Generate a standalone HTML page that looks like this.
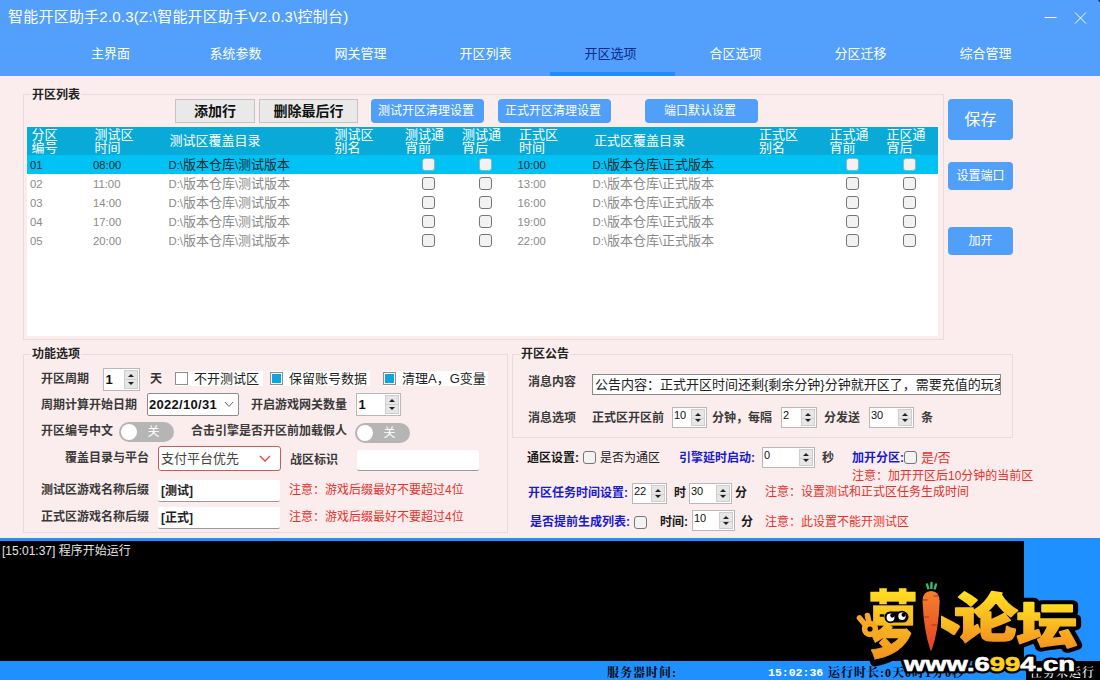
<!DOCTYPE html>
<html lang="zh-CN">
<head>
<meta charset="utf-8">
<title>智能开区助手2.0.3</title>
<style>
*{box-sizing:border-box;margin:0;padding:0}
html,body{width:1100px;height:680px;overflow:hidden}
body{position:relative;background:#fbeded;font-family:"Liberation Sans","Noto Sans CJK SC",sans-serif;font-size:12px;color:#333;}
.abs,.abs-all>*{position:absolute}
.a{position:absolute;white-space:nowrap;line-height:1}
/* header */
#hdr{position:absolute;left:0;top:0;width:1100px;height:76px;background:#52a0fb}
#title{left:8px;top:7.8px;font-size:15px;color:#fff;line-height:18px;letter-spacing:.22px}
.tab{position:absolute;top:43.6px;margin-left:-1px;width:125px;height:20px;text-align:center;font-size:13px;line-height:20px;color:#fff}
.tab.on{color:#0a2a8c}
#uline{position:absolute;left:550px;top:72px;width:125px;height:4px;background:#1e8cff}
/* group boxes */
.gb{position:absolute;border:1px solid #e6dcdc;}
.gbl{position:absolute;font-weight:bold;font-size:12px;color:#222;background:#fbeded;line-height:14px;padding:0 1px;white-space:nowrap}
.lb{position:absolute;font-weight:bold;font-size:12px;line-height:14px;color:#3a3a3a;white-space:nowrap}
.bl{color:#1a1ad2}
.bk{color:#1a1a1a}
.red{position:absolute;font-size:12px;line-height:14px;color:#e8302a;white-space:nowrap}
.btn{position:absolute;background:#50a0fa;color:#fff;border-radius:4px;text-align:center;font-size:12px;white-space:nowrap}
.gbtn{position:absolute;background:#e9e9e9;border:1px solid #c4c4c4;color:#111;font-weight:bold;font-size:14px;text-align:center;white-space:nowrap}
/* table */
#tbl{position:absolute;left:27px;top:127px;width:911px;height:209px;background:#fff}
#th{position:absolute;left:0;top:0;width:911px;height:28px;background:#09aad8}
#sel{position:absolute;left:0;top:28px;width:911px;height:19px;background:#00c2f4}
.h{position:absolute;color:#fff;font-size:13px;line-height:13px;white-space:nowrap}
.c{position:absolute;font-size:13px;line-height:19px;color:#8a8a8a;white-space:nowrap}
.c.n,.c em{font-size:11.3px;font-style:normal}
.c.n{margin-top:.5px}
.c.s{color:#1a2a33}
.cb{position:absolute;width:13px;height:13px;border:1px solid #767676;border-radius:3px;background:#f2f2f2}
/* spinner */
.sp{position:absolute;background:#fff;border:1px solid #b9b9b9;height:21px}
.sp i{position:absolute;left:1px;top:1px;font-style:normal;font-size:11px;line-height:12px;color:#111}
.sp b{position:absolute;right:1px;top:1px;bottom:1px;width:14px;background:#e6e6e6;border:1px solid #cfcfcf}
.sp b:before{content:"";position:absolute;left:3px;top:3px;border:3px solid transparent;border-top:none;border-bottom:3px solid #222}
.sp b:after{content:"";position:absolute;left:3px;bottom:3px;border:3px solid transparent;border-bottom:none;border-top:3px solid #222}
.sp b s{position:absolute;left:0;right:0;top:8px;height:1px;background:#cfcfcf}
.tg{position:absolute;width:55px;height:20px;border-radius:10px;background:#b5b5b5}
.tg:before{content:"";position:absolute;left:2px;top:2px;width:16px;height:16px;border-radius:8px;background:#fff}
.tg span{position:absolute;left:28.5px;top:3px;font-size:12px;line-height:14px;color:#fff}
.inp{position:absolute;background:#fff;border-radius:2px;border-bottom:1px solid #9a9a9a;font-weight:bold;font-size:12px;color:#222;line-height:20px;padding-left:3px}
.wck{position:absolute;background:#fff;height:15px;padding-right:1px;box-sizing:content-box}
.wck u{position:absolute;left:0;top:1px;width:13px;height:13px;border:1px solid #8e8e8e;background:#fff;text-decoration:none}
.wck u.on:after{content:"";position:absolute;left:1px;top:1px;width:9px;height:9px;background:#0aa6dd}
.wck span{position:absolute;left:19px;top:0;font-size:13px;line-height:15px;color:#222;white-space:nowrap}
.sb{font-weight:bold;font-size:12px;line-height:14px;letter-spacing:1px;font-family:"Liberation Serif","Noto Serif CJK SC",serif}
</style>
</head>
<body>
<div id="hdr"></div>
<div id="title" class="a">智能开区助手2.0.3(Z:\智能开区助手V2.0.3\控制台)</div>
<div class="tab" style="left:49px">主界面</div>
<div class="tab" style="left:174px">系统参数</div>
<div class="tab" style="left:299px">网关管理</div>
<div class="tab" style="left:424px">开区列表</div>
<div class="tab on" style="left:549px">开区选项</div>
<div class="tab" style="left:674px">合区选项</div>
<div class="tab" style="left:799px">分区迁移</div>
<div class="tab" style="left:924px">综合管理</div>
<div id="uline"></div>
<div style="position:absolute;left:1097.5px;top:-2px;width:5px;height:4px;border-radius:2px;background:#0d4a78"></div>
<svg class="abs" style="position:absolute;left:1040px;top:8px" width="50" height="20" viewBox="0 0 50 20"><path d="M4.5 9.5H16.5M35 4.5L46 15.5M46 4.5L35 15.5" stroke="#fff" stroke-width="1" fill="none"/></svg>

<div class="gb" style="left:23px;top:94px;width:921px;height:246px"></div>
<div class="gbl" style="left:31px;top:88px">开区列表</div>
<div class="gbtn" style="left:175px;top:99px;width:80px;height:24px;line-height:22px">添加行</div>
<div class="gbtn" style="left:259px;top:99px;width:99px;height:24px;line-height:22px">删除最后行</div>
<div class="btn" style="left:371px;top:99px;width:113px;height:24px;line-height:24px;padding-right:3px">测试开区清理设置</div>
<div class="btn" style="left:498px;top:99px;width:113px;height:24px;line-height:24px;padding-right:3px">正式开区清理设置</div>
<div class="btn" style="left:645px;top:99px;width:113px;height:24px;line-height:24px;padding-right:3px">端口默认设置</div>
<div class="btn" style="left:948px;top:99px;width:65px;height:41px;line-height:41px;font-size:16px">保存</div>
<div class="btn" style="left:948px;top:162px;width:65px;height:28px;line-height:28px;font-size:12px">设置端口</div>
<div class="btn" style="left:948px;top:227px;width:65px;height:28px;line-height:28px;font-size:12px">加开</div>
<div id="tbl"><div id="th"></div><div id="sel"></div>
<div class="h" style="margin:-.4px 0 0 -.5px;left:5px;top:1px">分区<br>编号</div>
<div class="h" style="margin:-.4px 0 0 -.5px;left:68px;top:1px">测试区<br>时间</div>
<div class="h" style="margin:-.4px 0 0 -.5px;left:143px;top:7px">测试区覆盖目录</div>
<div class="h" style="margin:-.4px 0 0 -.5px;left:308px;top:1px">测试区<br>别名</div>
<div class="h" style="margin:-.4px 0 0 -.5px;left:378.5px;top:1px">测试通<br>宵前</div>
<div class="h" style="margin:-.4px 0 0 -.5px;left:435.5px;top:1px">测试通<br>宵后</div>
<div class="h" style="margin:-.4px 0 0 -.5px;left:492.5px;top:1px">正式区<br>时间</div>
<div class="h" style="margin:-.4px 0 0 -.5px;left:567.5px;top:7px">正式区覆盖目录</div>
<div class="h" style="margin:-.4px 0 0 -.5px;left:732.5px;top:1px">正式区<br>别名</div>
<div class="h" style="margin:-.4px 0 0 -.5px;left:803px;top:1px">正式通<br>宵前</div>
<div class="h" style="margin:-.4px 0 0 -.5px;left:860px;top:1px">正区通<br>宵后</div>
<div class="c n s" style="left:3px;top:28px">01</div>
<div class="c n s" style="left:66px;top:28px">08:00</div>
<div class="c s" style="left:141.5px;top:28px"><em>D:\</em>版本仓库<em>\</em>测试版本</div>
<div class="c n s" style="left:490.5px;top:28px">10:00</div>
<div class="c s" style="left:565.5px;top:28px"><em>D:\</em>版本仓库<em>\</em>正式版本</div>
<div class="cb" style="left:394.5px;top:31px;border-color:#8fb4c0"></div>
<div class="cb" style="left:452.0px;top:31px;border-color:#8fb4c0"></div>
<div class="cb" style="left:819.0px;top:31px;border-color:#8fb4c0"></div>
<div class="cb" style="left:876.0px;top:31px;border-color:#8fb4c0"></div>
<div class="c n" style="left:3px;top:47px">02</div>
<div class="c n" style="left:66px;top:47px">11:00</div>
<div class="c" style="left:141.5px;top:47px"><em>D:\</em>版本仓库<em>\</em>测试版本</div>
<div class="c n" style="left:490.5px;top:47px">13:00</div>
<div class="c" style="left:565.5px;top:47px"><em>D:\</em>版本仓库<em>\</em>正式版本</div>
<div class="cb" style="left:394.5px;top:50px"></div>
<div class="cb" style="left:452.0px;top:50px"></div>
<div class="cb" style="left:819.0px;top:50px"></div>
<div class="cb" style="left:876.0px;top:50px"></div>
<div class="c n" style="left:3px;top:66px">03</div>
<div class="c n" style="left:66px;top:66px">14:00</div>
<div class="c" style="left:141.5px;top:66px"><em>D:\</em>版本仓库<em>\</em>测试版本</div>
<div class="c n" style="left:490.5px;top:66px">16:00</div>
<div class="c" style="left:565.5px;top:66px"><em>D:\</em>版本仓库<em>\</em>正式版本</div>
<div class="cb" style="left:394.5px;top:69px"></div>
<div class="cb" style="left:452.0px;top:69px"></div>
<div class="cb" style="left:819.0px;top:69px"></div>
<div class="cb" style="left:876.0px;top:69px"></div>
<div class="c n" style="left:3px;top:85px">04</div>
<div class="c n" style="left:66px;top:85px">17:00</div>
<div class="c" style="left:141.5px;top:85px"><em>D:\</em>版本仓库<em>\</em>测试版本</div>
<div class="c n" style="left:490.5px;top:85px">19:00</div>
<div class="c" style="left:565.5px;top:85px"><em>D:\</em>版本仓库<em>\</em>正式版本</div>
<div class="cb" style="left:394.5px;top:88px"></div>
<div class="cb" style="left:452.0px;top:88px"></div>
<div class="cb" style="left:819.0px;top:88px"></div>
<div class="cb" style="left:876.0px;top:88px"></div>
<div class="c n" style="left:3px;top:104px">05</div>
<div class="c n" style="left:66px;top:104px">20:00</div>
<div class="c" style="left:141.5px;top:104px"><em>D:\</em>版本仓库<em>\</em>测试版本</div>
<div class="c n" style="left:490.5px;top:104px">22:00</div>
<div class="c" style="left:565.5px;top:104px"><em>D:\</em>版本仓库<em>\</em>正式版本</div>
<div class="cb" style="left:394.5px;top:107px"></div>
<div class="cb" style="left:452.0px;top:107px"></div>
<div class="cb" style="left:819.0px;top:107px"></div>
<div class="cb" style="left:876.0px;top:107px"></div>
</div>
<div class="gb" style="left:23px;top:354px;width:485px;height:179px"></div>
<div class="gbl" style="left:31px;top:347px">功能选项</div>
<div class="lb " style="left:41px;top:372px">开区周期</div>
<div class="sp" style="left:103px;top:368px;width:37px;height:23px"><i style="font-weight:bold;font-size:13px;top:4px;left:1.5px;line-height:14px">1</i><b><s></s></b></div>
<div class="a" style="left:150px;top:372px;font-size:12px;font-weight:bold;line-height:14px;color:#333">天</div>
<div class="wck" style="left:175px;top:371px;width:87px"><u></u><span>不开测试区</span></div>
<div class="wck" style="left:270px;top:371px;width:99px"><u class="on"></u><span>保留账号数据</span></div>
<div class="wck" style="left:383px;top:371px;width:104px"><u class="on"></u><span>清理A，G变量</span></div>
<div class="lb " style="left:41px;top:398px">周期计算开始日期</div>
<div class="dt" style="position:absolute;left:147px;top:393px;width:92px;height:23px;background:#fff;border:1px solid #8c8c8c;border-radius:2px"><span style="position:absolute;left:1px;top:3px;font-weight:bold;font-size:13px;line-height:15px;color:#111;letter-spacing:.3px">2022/10/31</span><svg style="position:absolute;right:4px;top:7px" width="10" height="7" viewBox="0 0 10 7"><path d="M1 1L5 5.5L9 1" stroke="#666" stroke-width="1" fill="none"/></svg></div>
<div class="lb " style="left:251px;top:398px">开启游戏网关数量</div>
<div class="sp" style="left:356px;top:393px;width:45px;height:23px"><i style="font-weight:bold;font-size:13px;top:4px;left:1.5px;line-height:14px">1</i><b><s></s></b></div>
<div class="lb " style="left:41px;top:424px">开区编号中文</div>
<div class="tg" style="left:119px;top:422px"><span>关</span></div>
<div class="lb " style="left:191px;top:424px">合击引擎是否开区前加载假人</div>
<div class="tg" style="left:355px;top:423px"><span>关</span></div>
<div class="lb " style="left:65px;top:451px">覆盖目录与平台</div>
<div style="position:absolute;left:158px;top:446px;width:123px;height:25px;background:#fff;border:1px solid #cc5a56;border-radius:3px"><span style="position:absolute;left:2px;top:4px;font-size:13px;line-height:16px;color:#444;white-space:nowrap">支付平台优先</span><svg style="position:absolute;right:9px;top:8px" width="12" height="8" viewBox="0 0 12 8"><path d="M1 1L6 6L11 1" stroke="#d04848" stroke-width="1.3" fill="none"/></svg></div>
<div class="lb " style="left:290px;top:453px">战区标识</div>
<div class="inp" style="left:357px;top:450px;width:122px;height:21px"></div>
<div class="lb " style="left:41px;top:483px">测试区游戏名称后缀</div>
<div class="inp" style="left:158px;top:480px;width:122px;height:22px;line-height:22px">[测试]</div>
<div class="red" style="left:289px;top:483px">注意：游戏后缀最好不要超过4位</div>
<div class="lb " style="left:41px;top:510px">正式区游戏名称后缀</div>
<div class="inp" style="left:158px;top:507px;width:122px;height:22px;line-height:22px">[正式]</div>
<div class="red" style="left:289px;top:510px">注意：游戏后缀最好不要超过4位</div>
<div class="gb" style="left:512px;top:354px;width:501px;height:84px"></div>
<div class="gbl" style="left:520px;top:347px">开区公告</div>
<div class="lb " style="left:528px;top:375px">消息内容</div>
<div style="position:absolute;left:592px;top:374px;width:409px;height:21px;background:#fff;border:1px solid #8a8a8a;overflow:hidden"><span style="position:absolute;left:2px;top:2px;font-size:13px;line-height:15px;color:#222;white-space:nowrap">公告内容：正式开区时间还剩{剩余分钟}分钟就开区了，需要充值的玩家请抓紧时间</span></div>
<div class="lb " style="left:528px;top:411px">消息选项</div>
<div class="lb " style="left:592px;top:411px">正式区开区前</div>
<div class="sp" style="left:672px;top:407px;width:35px;height:21px"><i>10</i><b><s></s></b></div>
<div class="lb " style="left:712px;top:411px">分钟，每隔</div>
<div class="sp" style="left:781px;top:407px;width:36px;height:21px"><i>2</i><b><s></s></b></div>
<div class="lb " style="left:824px;top:411px">分发送</div>
<div class="sp" style="left:869px;top:407px;width:45px;height:21px"><i>30</i><b><s></s></b></div>
<div class="lb " style="left:921px;top:411px">条</div>
<div class="lb bk" style="left:527px;top:451px">通区设置:</div>
<div class="cb" style="left:583px;top:451px"></div>
<div class="a" style="left:600px;top:451px;font-size:12px;line-height:15px;color:#222">是否为通区</div>
<div class="lb bl" style="left:679px;top:451px">引擎延时启动:</div>
<div class="sp" style="left:762px;top:447px;width:53px;height:21px"><i>0</i><b><s></s></b></div>
<div class="lb " style="left:822px;top:451px">秒</div>
<div class="lb bl" style="left:852px;top:451px">加开分区:</div>
<div class="cb" style="left:904px;top:451px"></div>
<div class="a" style="left:921px;top:450px;font-size:13px;line-height:15px;color:#e8302a">是/否</div>
<div class="red" style="left:852px;top:469px">注意：加开开区后10分钟的当前区</div>
<div class="lb bl" style="left:528px;top:486px">开区任务时间设置:</div>
<div class="sp" style="left:632px;top:483px;width:35px;height:21px"><i>22</i><b><s></s></b></div>
<div class="lb bk" style="left:674px;top:486px">时</div>
<div class="sp" style="left:689px;top:483px;width:43px;height:21px"><i>30</i><b><s></s></b></div>
<div class="lb bk" style="left:735px;top:486px">分</div>
<div class="red" style="left:765px;top:485px">注意：设置测试和正式区任务生成时间</div>
<div class="lb bl" style="left:530px;top:515px">是否提前生成列表:</div>
<div class="cb" style="left:634px;top:516px"></div>
<div class="lb bk" style="left:660px;top:515px">时间:</div>
<div class="sp" style="left:692px;top:510px;width:43px;height:21px"><i>10</i><b><s></s></b></div>
<div class="lb bk" style="left:741px;top:515px">分</div>
<div class="red" style="left:765px;top:515px">注意：此设置不能开测试区</div>
<div style="position:absolute;left:0;top:538px;width:1100px;height:142px;background:#1e90ff"></div>
<div style="position:absolute;left:0;top:541px;width:1024px;height:120px;background:#000"></div>
<div class="a" style="left:2px;top:544px;font-size:12px;line-height:15px;color:#e4e4e4">[15:01:37] 程序开始运行</div>
<div class="a sb" style="left:607px;top:666px;color:#000">服务器时间:</div>
<div class="a sb" style="left:768px;top:666px;color:#fff;font-family:'Liberation Mono',monospace;font-size:11.5px;letter-spacing:0">15:02:36</div>
<div class="a sb" style="left:828px;top:666px;color:#000">运行时长:0天0时1分0秒</div>
<div style="position:absolute;left:1026px;top:661px;width:74px;height:19px;background:#000"></div>
<div class="a sb" style="left:1030px;top:666px;color:#fff;font-weight:500">任务未运行</div>
<svg id="logo" style="position:absolute;left:840px;top:570px" width="260" height="110" viewBox="0 0 260 110">
<defs><linearGradient id="lg" x1="0" y1="0" x2="0" y2="1"><stop offset="0.1" stop-color="#ffdc22"/><stop offset="0.9" stop-color="#f39320"/></linearGradient>
<linearGradient id="cg" x1="0" y1="0" x2="0" y2="1"><stop offset="0" stop-color="#f5822c"/><stop offset="1" stop-color="#e63e26"/></linearGradient>
<clipPath id="cp"><rect x="101" y="30" width="40" height="50"/></clipPath></defs>
<g font-family="'Liberation Sans','Noto Sans CJK SC',sans-serif" font-weight="900" stroke-linejoin="round" stroke-linecap="round">
<g fill="#000" stroke="#000" stroke-width="10">
<text transform="translate(28.1 80.9) scale(.998 1.461)" font-size="50" font-weight="900">萝</text>
<text x="75" y="72.4" font-size="46" clip-path="url(#cp)">卜</text>
<text transform="translate(114.2 67.2) scale(1.259 1.055)" font-size="50">论</text>
<text transform="translate(176.6 72.9) scale(1.217 .955)" font-size="50">坛</text>
<circle cx="30" cy="59" r="5.4" fill="none" stroke="#000" stroke-width="12"/><path d="M25 54.5L19.5 48M29 52.5L27.5 45.5M35 62L42 63.5" fill="none" stroke="#000" stroke-width="12"/>
</g>
<g fill="url(#lg)" stroke="url(#lg)" stroke-width="1.6">
<text transform="translate(28.1 80.9) scale(.998 1.461)" font-size="50" font-weight="900" stroke-width=".4">萝</text>
<text x="75" y="72.4" font-size="46" clip-path="url(#cp)" stroke-width="3.4">卜</text>
<text transform="translate(114.2 67.2) scale(1.259 1.055)" font-size="50">论</text>
<text transform="translate(176.6 72.9) scale(1.217 .955)" font-size="50">坛</text>
<circle cx="30" cy="59" r="5.4" fill="none" stroke="#f8a824" stroke-width="5.6"/><path d="M25 54.5L19.5 48M29 52.5L27.5 45.5M35 62L42 63.5" fill="none" stroke="#f8a824" stroke-width="5.6"/>
</g>
</g>
<rect x="44.5" y="41.5" width="24" height="11" rx="5.5" fill="#000"/>
<circle cx="50.5" cy="47.5" r="4.8" fill="#fff" stroke="#000" stroke-width="1.8"/><circle cx="52.3" cy="45.6" r="2.1" fill="#000"/>
<circle cx="62" cy="46.3" r="4.6" fill="#fff" stroke="#000" stroke-width="1.8"/><circle cx="63.6" cy="44.8" r="2.1" fill="#000"/>
<path d="M87 14.5L89 21M91.5 13L91.3 21M96 14.5L94 21" stroke="#3cb86e" stroke-width="2.4" stroke-linecap="round" fill="none"/>
<path d="M81.5 31.5Q81.5 20 91 20Q100.7 20 100.7 31.5Q99.5 62 92.5 80.5Q91 83 89.5 80.5Q83 62 81.5 31.5Z" fill="url(#cg)" stroke="#000" stroke-width="2"/>
<path d="M83 30h4M94 26h4.5M85 47h3.5M92 55h4" stroke="#a8321a" stroke-width="1" stroke-linecap="round" fill="none"/>
<g font-family="'Liberation Sans',sans-serif" font-weight="bold" font-size="20" stroke-linejoin="round">
<text x="64" y="101" stroke="#000" stroke-width="5" fill="#000" textLength="171" lengthAdjust="spacingAndGlyphs">www.6994.cn</text>
<text x="64" y="101" fill="#fff" stroke="#fff" stroke-width=".6" textLength="171" lengthAdjust="spacingAndGlyphs">www.6<tspan fill="#ffd21e" stroke="#ffd21e">99</tspan>4.cn</text>
</g>
</svg>
</body>
</html>
